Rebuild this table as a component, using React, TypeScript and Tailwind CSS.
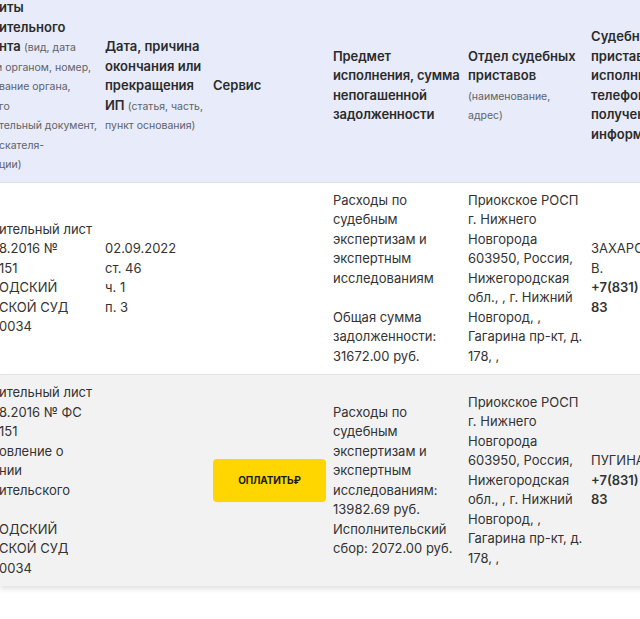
import React from 'react';

const cols = 'grid grid-cols-[105px_108px_120px_135px_123px_110px]';

function Lines({ items }: { items: string[] }) {
    return (
        <div className="-ml-[1px] whitespace-nowrap">
            {items.map((line, i) => (
                <div key={i}>{line || '\u00a0'}</div>
            ))}
        </div>
    );
}

function Note({ children }: { children: React.ReactNode }) {
    return <span className="text-[10.5px] leading-none font-normal text-[#5f6368]">{children}</span>;
}

export default function App() {
    const rows = [
        {
            doc: ['ительный лист', '8.2016 №', '151', 'ОДСКИЙ', 'СКОЙ СУД', '0034'],
            end: ['02.09.2022', 'ст. 46', 'ч. 1', 'п. 3'],
            pay: false,
            subject: (
                <>
                    <p>Расходы по судебным экспертизам и экспертным исследованиям</p>
                    <p className="mt-[19.5px]">Общая сумма задолженности: 31672.00 руб.</p>
                </>
            ),
            bailiff: ['ЗАХАРОВА Н.', 'В.'],
            phone: ['+7(831) 422-01-', '83'],
            bg: 'bg-white',
        },
        {
            doc: ['ительный лист', '8.2016 № ФС', '151', 'овление о', 'нии', 'ительского', '', 'ОДСКИЙ', 'СКОЙ СУД', '0034'],
            end: [],
            pay: true,
            subject: (
                <>
                    <p>Расходы по судебным экспертизам и экспертным исследованиям: 13982.69 руб.</p>
                    <p>Исполнительский сбор: 2072.00 руб.</p>
                </>
            ),
            bailiff: ['ПУГИНА О. В.'],
            phone: ['+7(831) 422-01-', '83'],
            bg: 'bg-[#f2f2f2] shadow-[0_3px_5px_rgba(0,0,0,0.12)]',
        },
    ];

    return (
        <div className="min-h-[619px] w-full overflow-hidden bg-white font-['Inter',sans-serif] text-[13px] leading-[19.5px] text-[#333]">
            <div className="-mt-[10px] w-[760px]">
                {/* Header */}
                <div className={`${cols} items-center bg-[#e7ebfa] py-2 font-semibold text-[#2b2b2b]`}>
                    <div className="-ml-[1px] whitespace-nowrap">
                        <div>иты</div>
                        <div>ительного</div>
                        <div>нта <Note>(вид, дата</Note></div>
                        <div className="-ml-[3px]"><Note>и органом, номер,</Note></div>
                        <div><Note>вание органа,</Note></div>
                        <div><Note>го</Note></div>
                        <div><Note>тельный документ,</Note></div>
                        <div><Note>скателя-</Note></div>
                        <div><Note>ции)</Note></div>
                    </div>
                    <div className="pr-1">
                        Дата, причина окончания или прекращения ИП <Note>(статья, часть, пункт основания)</Note>
                    </div>
                    <div className="pr-2">Сервис</div>
                    <div className="tracking-[-0.1px]">Предмет исполнения, сумма непогашенной задолженности</div>
                    <div className="pr-[5px]">
                        Отдел судебных приставов <Note>(наименование, адрес)</Note>
                    </div>
                    <div className="pr-2">Судебный пристав-исполнитель, телефон для получения информации</div>
                </div>

                {rows.map((row, i) => (
                    <div key={i} className={`${cols} items-center border-t border-[#e3e3e3] py-2 ${row.bg}`}>
                        <Lines items={row.doc} />
                        <div className="pr-2">
                            {row.end.map((l) => (
                                <div key={l}>{l}</div>
                            ))}
                        </div>
                        <div className="pr-[7px]">
                            {row.pay && (
                                <button className="flex h-[43px] w-full items-center justify-center rounded-[4px] bg-[#ffd600] text-[10px] font-bold tracking-[-0.2px] text-[#1a1a1a]">
                                    ОПЛАТИТЬ₽
                                </button>
                            )}
                        </div>
                        <div className="pr-2">{row.subject}</div>
                        <div className="pr-[5px]">
                            Приокское РОСП г. Нижнего Новгорода 603950, Россия, Нижегородская обл., , г. Нижний Новгород, , Гагарина пр-кт, д. 178, ,
                        </div>
                        <div className="whitespace-nowrap">
                            {row.bailiff.map((l) => (
                                <div key={l}>{l}</div>
                            ))}
                            <div className="font-semibold">
                                {row.phone.map((l) => (
                                    <div key={l}>{l}</div>
                                ))}
                            </div>
                        </div>
                    </div>
                ))}
            </div>
        </div>
    );
}
